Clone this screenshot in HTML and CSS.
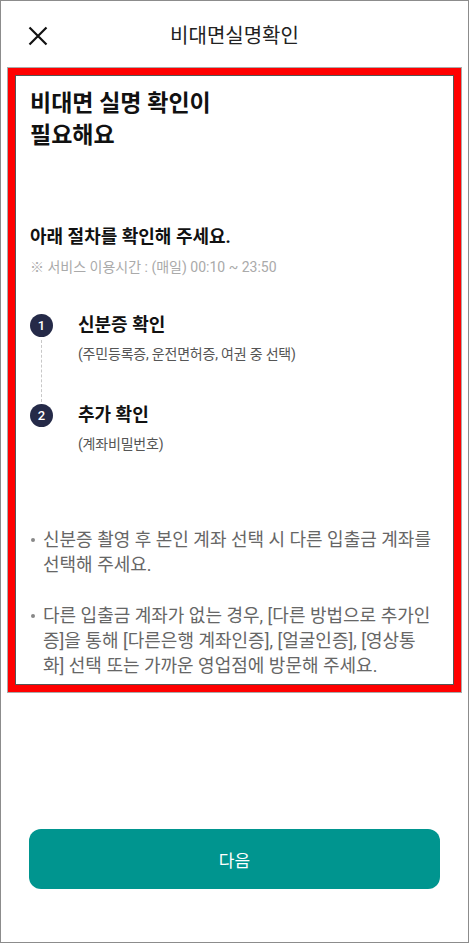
FILE: index.html
```html
<!DOCTYPE html>
<html lang="ko">
<head>
    <meta charset="UTF-8">
    <meta name="viewport" content="width=device-width, initial-scale=1.0">
    <title>비대면실명확인</title>
    <link rel="stylesheet" href="styles.css">
</head>
<body>
    <header class="top-bar">
        <button class="close-btn" aria-label="닫기">
            <svg width="20" height="20" viewBox="0 0 20 20">
                <path d="M1.5 1.5 L18.5 18.5 M18.5 1.5 L1.5 18.5" stroke="#111" stroke-width="2.2" fill="none"/>
            </svg>
        </button>
        <h1 class="top-title">비대면실명확인</h1>
    </header>

    <main class="content">
        <h2 class="headline">비대면 실명 확인이<br>필요해요</h2>

        <h3 class="guide">아래 절차를 확인해 주세요.</h3>
        <p class="hours">※ 서비스 이용시간 : (매일) 00:10 ~ 23:50</p>

        <ol class="steps">
            <li class="step">
                <div class="step-mark">
                    <span class="step-num">1</span>
                    <span class="step-line"></span>
                </div>
                <div class="step-body">
                    <strong>신분증 확인</strong>
                    <span>(주민등록증, 운전면허증, 여권 중 선택)</span>
                </div>
            </li>
            <li class="step">
                <div class="step-mark">
                    <span class="step-num">2</span>
                </div>
                <div class="step-body">
                    <strong>추가 확인</strong>
                    <span>(계좌비밀번호)</span>
                </div>
            </li>
        </ol>

        <ul class="notes">
            <li>신분증 촬영 후 본인 계좌 선택 시 다른 입출금 계좌를 선택해 주세요.</li>
            <li>다른 입출금 계좌가 없는 경우, [다른 방법으로 추가인증]을 통해 [다른은행 계좌인증], [얼굴인증], [영상통화] 선택 또는 가까운 영업점에 방문해 주세요.</li>
        </ul>
    </main>

    <div class="bottom">
        <button class="next-btn">다음</button>
    </div>
</body>
</html>
```

FILE: styles.css
```css
* {
    box-sizing: border-box;
}
html, body {
    height: 100%;
}
body {
    margin: 0;
    border: 1px solid #8c8c8c;
    background: #fff;
    font-family: Roboto, "Noto Sans CJK KR", sans-serif;
    color: #111;
    display: flex;
    flex-direction: column;
}

/* header */
.top-bar {
    height: 67px;
    position: relative;
    display: flex;
    align-items: center;
    justify-content: center;
}
.close-btn {
    position: absolute;
    left: 27px;
    top: 25px;
    padding: 0;
    border: none;
    background: none;
    width: 20px;
    height: 20px;
}
.top-title {
    margin: 0;
    font-size: 20px;
    font-weight: 400;
    color: #222;
}

/* highlighted content block */
.content {
    margin: 0 7px;
    border: 7px solid #f00;
    box-shadow: inset 0 0 0 1px #555, 0 0 0 1px #aaa;
    padding: 13px 18px 7px 15px;
}
.headline {
    margin: 0;
    font-size: 23px;
    line-height: 32px;
    font-weight: 700;
}
.guide {
    margin: 73px 0 0;
    font-size: 18px;
    line-height: 24px;
    font-weight: 700;
}
.hours {
    margin: 8px 0 0;
    font-size: 14px;
    line-height: 20px;
    color: #aaa;
}

/* steps */
.steps {
    list-style: none;
    margin: 37px 0 0;
    padding: 0;
}
.step {
    display: flex;
    gap: 25px;
}
.step:first-child {
    height: 90px;
}
.step-mark {
    width: 23px;
    display: flex;
    flex-direction: column;
    align-items: center;
}
.step-num {
    width: 23px;
    height: 23px;
    border-radius: 50%;
    background: #252a48;
    color: #fff;
    font-size: 13px;
    font-weight: 500;
    display: flex;
    align-items: center;
    justify-content: center;
}
.step-line {
    flex: 1;
    margin: 3px 0 2px;
    border-left: 1px dashed #c8c8c8;
}
.step-body {
    display: flex;
    flex-direction: column;
}
.step-body strong {
    font-size: 18px;
    line-height: 22px;
    font-weight: 700;
}
.step-body span {
    margin-top: 8px;
    font-size: 14px;
    line-height: 20px;
    color: #555;
    letter-spacing: -0.2px;
}

/* notes */
.notes {
    list-style: none;
    margin: 73px 0 0;
    padding: 0;
    font-size: 18px;
    line-height: 25px;
    color: #666;
    word-break: break-all;
}
.notes li {
    position: relative;
    padding-left: 13px;
}
.notes li + li {
    margin-top: 26px;
}
.notes li::before {
    content: "";
    position: absolute;
    left: 1px;
    top: 11px;
    width: 4px;
    height: 4px;
    border-radius: 50%;
    background: #888;
}

/* bottom button */
.bottom {
    margin-top: auto;
    padding: 0 28px 53px;
}
.next-btn {
    width: 100%;
    height: 60px;
    border: none;
    border-radius: 12px;
    background: #00958f;
    color: #fff;
    font-family: inherit;
    font-size: 17px;
}
```
